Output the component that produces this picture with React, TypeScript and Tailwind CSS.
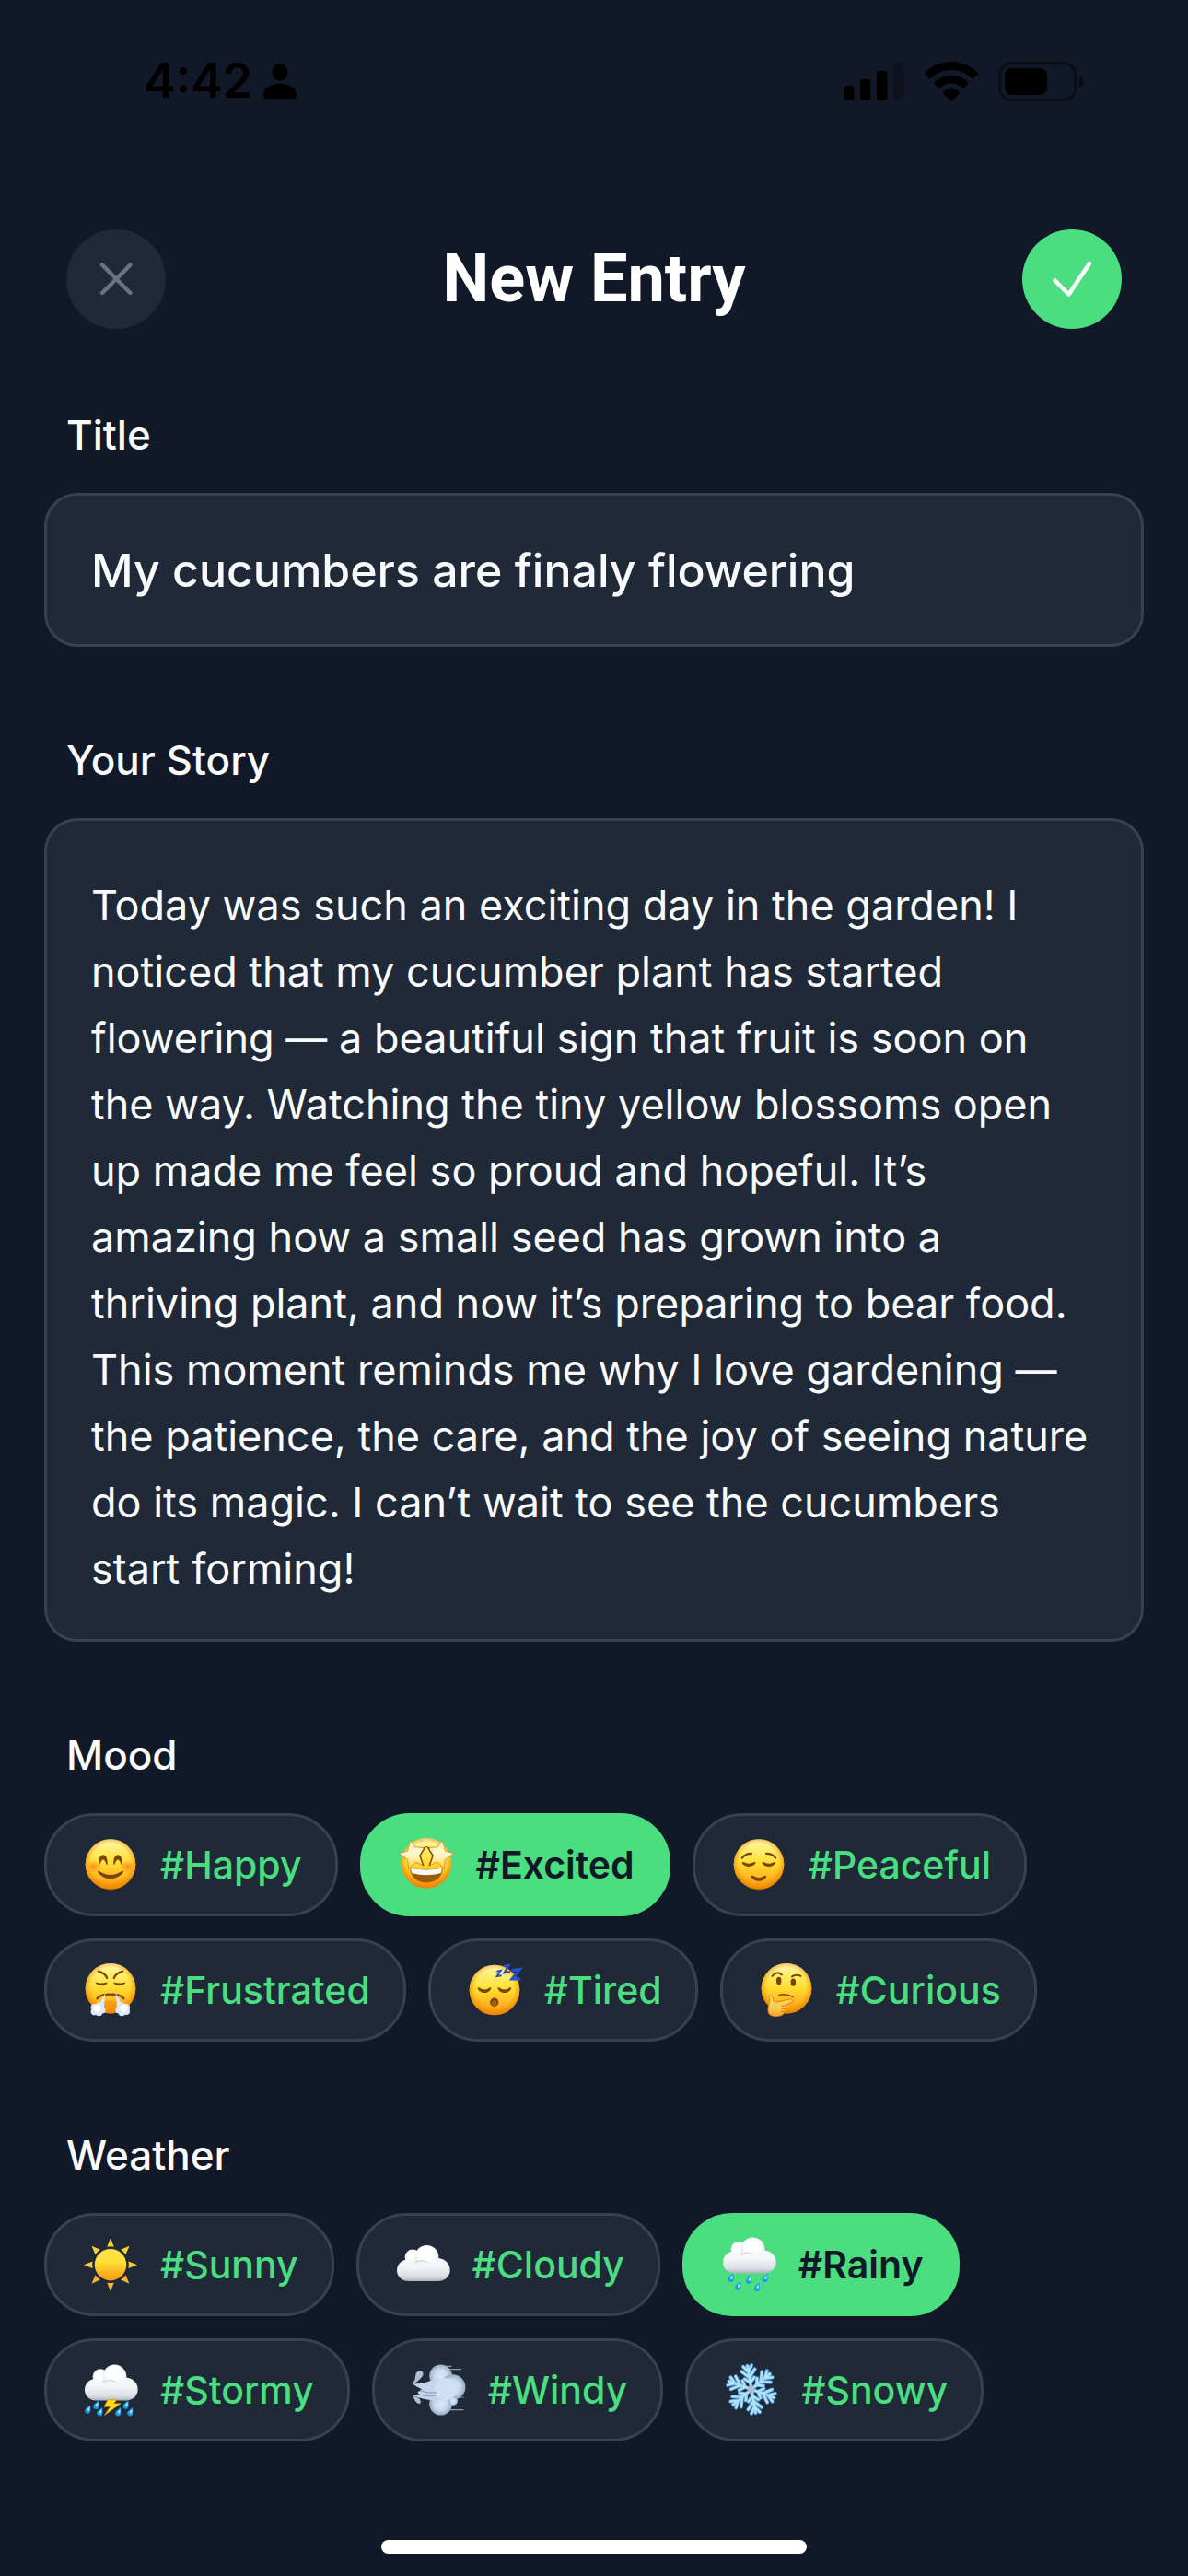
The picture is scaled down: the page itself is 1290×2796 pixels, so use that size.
import { useId, useState } from 'react'
import type { ReactNode } from 'react'

const INITIAL_TITLE = 'My cucumbers are finaly flowering'

const INITIAL_STORY =
  'Today was such an exciting day in the garden! I noticed that my cucumber plant has started flowering — a beautiful sign that fruit is soon on the way. Watching the tiny yellow blossoms open up made me feel so proud and hopeful. It’s amazing how a small seed has grown into a thriving plant, and now it’s preparing to bear food. This moment reminds me why I love gardening — the patience, the care, and the joy of seeing nature do its magic. I can’t wait to see the cucumbers start forming!'

const BROWN = '#7a4406'

function Emoji({ children }: { children: ReactNode }) {
  return (
    <span className="flex w-[66px] shrink-0 justify-center">
      <svg viewBox="0 0 60 60" className="h-[60px] w-[60px] overflow-visible" aria-hidden="true">
        {children}
      </svg>
    </span>
  )
}

function Face({ cy = 29.5, children }: { cy?: number; children: ReactNode }) {
  const id = useId()
  return (
    <Emoji>
      <defs>
        <linearGradient id={`${id}f`} x1="0" y1="0" x2="0" y2="1">
          <stop offset="0" stopColor="#fff7b8" />
          <stop offset="0.22" stopColor="#ffee6e" />
          <stop offset="0.5" stopColor="#ffdb2f" />
          <stop offset="0.78" stopColor="#ffb41f" />
          <stop offset="1" stopColor="#f78f0c" />
        </linearGradient>
        <radialGradient id={`${id}e`} cx="0.5" cy="0.47" r="0.53">
          <stop offset="0.72" stopColor="#f59300" stopOpacity="0" />
          <stop offset="1" stopColor="#e87c00" stopOpacity="0.8" />
        </radialGradient>
      </defs>
      <circle cx="30" cy={cy} r="27.3" fill={`url(#${id}f)`} />
      <circle cx="30" cy={cy} r="27.3" fill={`url(#${id}e)`} />
      {children}
    </Emoji>
  )
}

function HappyEmoji() {
  const id = useId()
  return (
    <Face>
      <defs>
        <radialGradient id={id}>
          <stop offset="0" stopColor="#ff7a1a" stopOpacity="0.8" />
          <stop offset="1" stopColor="#ff7a1a" stopOpacity="0" />
        </radialGradient>
      </defs>
      <ellipse cx="11.5" cy="32" rx="8.5" ry="7" fill={`url(#${id})`} />
      <ellipse cx="48.5" cy="32" rx="8.5" ry="7" fill={`url(#${id})`} />
      <g fill={BROWN}>
        <path d="M17.3 29.2C16.6 15.8 27.4 15.8 26.7 29.2C25 32 24.9 24.6 22 24.6S19 32 17.3 29.2Z" />
        <path d="M33.3 29.2C32.6 15.8 43.4 15.8 42.7 29.2C41 32 40.9 24.6 38 24.6S35 32 33.3 29.2Z" />
        <path d="M16.3 37C17.3 35.6 22 41 30 41S42.7 35.6 43.7 37C44.6 38.5 38.5 45.2 30 45.2S15.4 38.5 16.3 37Z" />
      </g>
    </Face>
  )
}

function ExcitedEmoji() {
  const id = useId()
  const star = 'M12.8 3.4L17.8 10.9L28.4 11.4L22.8 20.2L26.8 31L18.4 27L10.6 34.2L9.7 24.3L0 17.6L9.4 15.3Z'
  return (
    <Face cy={28.3}>
      <defs>
        <linearGradient id={id} x1="0" y1="0" x2="0" y2="1">
          <stop offset="0" stopColor="#fff9c8" />
          <stop offset="0.55" stopColor="#fff5c9" />
          <stop offset="1" stopColor="#ffd02a" />
        </linearGradient>
      </defs>
      <g fill={`url(#${id})`} stroke="#c98a1c" strokeWidth="0.8" strokeLinejoin="round">
        <path d={star} />
        <path d={star} transform="matrix(-1 0 0 1 60 0)" />
      </g>
      <path d="M26.5 12.2L28.4 11.4L23 20.2L26.8 31" fill="none" stroke="#8a5208" strokeWidth="1.6" />
      <path d="M33.5 12.2L31.6 11.4L37 20.2L33.2 31" fill="none" stroke="#8a5208" strokeWidth="1.6" />
      <path d="M12.4 33.2Q30 37 47.6 33.2C48 43 40 49.4 30 49.4S12 43 12.4 33.2Z" fill="#9a5c0c" />
      <path d="M13.3 33.8Q30 37.4 46.7 33.8C46.8 35.8 46.3 37.8 45.5 39.3Q30 43.4 14.5 39.3C13.7 37.8 13.2 35.8 13.3 33.8Z" fill="#f7f7f4" />
    </Face>
  )
}

function PeacefulEmoji() {
  return (
    <Face>
      <g fill="none" stroke={BROWN} strokeLinecap="round">
        <path d="M11.8 22.6Q15.5 17.7 22 17.8" strokeWidth="2.2" />
        <path d="M48.2 22.6Q44.5 17.7 38 17.8" strokeWidth="2.2" />
      </g>
      <g fill={BROWN}>
        <path d="M11.8 27.6C13 25.6 15.5 28.7 19.2 28.7S25.2 25.6 26.4 27.6C27 29.2 23.6 32 19.2 32S11.2 29.2 11.8 27.6Z" />
        <path d="M33.6 27.6C34.8 25.6 37.1 28.7 40.8 28.7S47 25.6 48.2 27.6C48.8 29.2 45.2 32 40.8 32S33 29.2 33.6 27.6Z" />
        <path d="M22 42.2C23 40.6 25.5 44 30 44S37 40.6 38 42.2C38.8 44 35 47.8 30 47.8S21.2 44 22 42.2Z" />
      </g>
    </Face>
  )
}

function FrustratedEmoji() {
  return (
    <Face cy={28.3}>
      <g fill="none" stroke={BROWN} strokeLinecap="round">
        <path d="M16.8 9.6Q24 11.2 26.2 17" strokeWidth="2.2" />
        <path d="M43.2 9.6Q36 11.2 33.8 17" strokeWidth="2.2" />
        <path d="M15.6 39.2Q18.5 34.6 30 34.6T44.4 39.2" strokeWidth="2.4" />
      </g>
      <g fill={BROWN}>
        <path d="M13.5 21.6Q20 23.6 26.5 21.6C26.5 26.4 14.5 26.6 13.5 21.6Z" />
        <path d="M33.5 21.6Q40 23.6 46.5 21.6C45.5 26.6 33.5 26.4 33.5 21.6Z" />
      </g>
      <path d="M23 43Q30 39 37 43V54Q30 56.5 23 54Z" fill="#f28a08" opacity="0.55" />
      <g fill="#dbe9fb">
        <path d="M24.6 32.4L16.8 47.6L22.8 48.6Z" />
        <path d="M35.4 32.4L43.2 47.6L37.2 48.6Z" />
        <circle cx="12.6" cy="49" r="4" />
        <circle cx="18.6" cy="47.8" r="4.6" />
        <circle cx="12.4" cy="53.6" r="3.8" />
        <circle cx="17.4" cy="54.4" r="3.8" />
        <circle cx="21" cy="51.8" r="3.6" />
        <circle cx="47" cy="49" r="4" />
        <circle cx="41.2" cy="47.8" r="4.6" />
        <circle cx="47.2" cy="53.2" r="3.8" />
        <circle cx="42.4" cy="54.4" r="3.8" />
        <circle cx="39" cy="51.8" r="3.6" />
      </g>
      <g fill="#fff">
        <circle cx="15.4" cy="49.6" r="4.2" />
        <circle cx="44.4" cy="49.6" r="4.2" />
      </g>
    </Face>
  )
}

function TiredEmoji() {
  return (
    <Face cy={30}>
      <g fill={BROWN}>
        <path d="M11.8 27.4C13 26.2 15.4 29.4 19.2 29.4S25 26.2 26.2 27.4C27 29 23.4 33 19.2 33S11 29 11.8 27.4Z" />
        <path d="M33.6 27.4C34.8 26.2 37.1 29.4 40.8 29.4S46.8 26.2 48 27.4C48.8 29 45.2 33 40.8 33S32.8 29 33.6 27.4Z" />
      </g>
      <ellipse cx="29.8" cy="43.2" rx="4.6" ry="4.7" fill={BROWN} />
      <ellipse cx="29.8" cy="44.2" rx="2.8" ry="2.8" fill="#a8640d" />
      <g fill="none" stroke="#2450c8" strokeLinejoin="miter">
        <polyline points="32.2,9.6 36.8,8.8 32.6,15 37.6,14.2" strokeWidth="1.9" />
        <polyline points="39.6,4 45.6,3 40.6,11.2 47,10.2" strokeWidth="2.3" />
        <polyline points="48.6,8.6 57.4,7.6 49,18 58.4,18" strokeWidth="3.2" />
      </g>
    </Face>
  )
}

function CuriousEmoji() {
  const id = useId()
  return (
    <Face cy={28.3}>
      <defs>
        <linearGradient id={id} x1="0" y1="0" x2="0" y2="1">
          <stop offset="0" stopColor="#ffd95a" />
          <stop offset="0.6" stopColor="#ffcb52" />
          <stop offset="1" stopColor="#f9a62e" />
        </linearGradient>
      </defs>
      <g fill="none" stroke={BROWN} strokeLinecap="round">
        <path d="M14.4 15Q19.2 8.6 25 13.4" strokeWidth="2" />
        <path d="M36 15.4Q40.4 12.6 45.6 14.8" strokeWidth="2" />
        <path d="M22 35.6Q29 33.4 36.8 37.4" strokeWidth="1.6" />
      </g>
      <ellipse cx="21.7" cy="20" rx="2.8" ry="4.2" fill={BROWN} />
      <ellipse cx="37.3" cy="21.6" rx="2.8" ry="4.2" fill={BROWN} />
      <path
        d="M11.6 35.6C13.6 34.6 15.2 37 15.6 40.2C16 42.6 17.6 43.4 20 43L34.4 39.8C37 39.4 37.8 42.2 35.4 43.4L28.6 46.6C30 48 29.2 49.6 28.4 50C29.2 51.6 28.4 53 27.4 53.4C27.8 56.6 24 58.4 18 58.4C12 58.4 9.6 55.8 10 50.6C10.3 45.6 12.4 43.6 11.6 40C11.2 38 10.6 36.2 11.6 35.6Z"
        fill={`url(#${id})`}
        stroke="#de8310"
        strokeWidth="1"
      />
      <path d="M28.6 46.6L24.4 47.6M28.4 50L24.6 50.6M27.4 53.4L24 53.6" stroke="#d57a0c" strokeWidth="1" fill="none" />
    </Face>
  )
}

function SunEmoji() {
  const id = useId()
  return (
    <Emoji>
      <defs>
        <linearGradient id={id} x1="0" y1="0" x2="0" y2="1">
          <stop offset="0" stopColor="#ffe04a" />
          <stop offset="0.4" stopColor="#ffdf35" />
          <stop offset="1" stopColor="#f39a12" />
        </linearGradient>
      </defs>
      {[0, 45, 90, 135, 180, 225, 270, 315].map((deg) => (
        <path
          key={deg}
          d="M30 1.2L33.8 10.8Q30 9.8 26.2 10.8Z"
          fill={deg > 90 && deg < 270 ? '#fbb03a' : '#fbcf38'}
          transform={`rotate(${deg} 30 30.2)`}
        />
      ))}
      <circle cx="30" cy="30.2" r="17.2" fill={`url(#${id})`} />
    </Emoji>
  )
}

function Cloud({ y }: { y: number }) {
  const id = useId()
  return (
    <g transform={`translate(0 ${y})`}>
      <defs>
        <linearGradient id={`${id}b`} x1="0" y1="9" x2="0" y2="48" gradientUnits="userSpaceOnUse">
          <stop offset="0" stopColor="#ffffff" />
          <stop offset="0.6" stopColor="#f4f5f7" />
          <stop offset="0.88" stopColor="#d9dce2" />
          <stop offset="1" stopColor="#aab4bf" />
        </linearGradient>
        <radialGradient id={`${id}l`} cx="0.5" cy="0.4" r="0.6">
          <stop offset="0.55" stopColor="#ffffff" />
          <stop offset="1" stopColor="#dfe1e6" />
        </radialGradient>
      </defs>
      <circle cx="19" cy="22" r="8.4" fill={`url(#${id}l)`} />
      <circle cx="34.4" cy="22" r="13" fill={`url(#${id}l)`} />
      <path
        d="M14.5 24.2C18 24.2 21 25.4 23.4 27.6C27 25.4 32 25.2 35.6 27.4C38.4 24.4 42.4 22.8 46.6 23C54.2 23.4 59.7 29 59.7 36C59.7 43 54 48 47 48H14.5C7.4 48 2 43 2 36.2C2 29.4 7.6 24.2 14.5 24.2Z"
        fill={`url(#${id}b)`}
      />
      <path d="M21 28.4Q28 23.4 35.4 27.6" fill="none" stroke="#d3d6dc" strokeWidth="1.2" />
    </g>
  )
}

function Drops({ at }: { at: [number, number][] }) {
  return (
    <>
      {at.map(([x, y]) => (
        <g key={`${x}-${y}`} transform={`translate(${x} ${y}) rotate(24)`}>
          <path d="M0 -5.2C1.4 -2 3 -0.4 3 1.8A3 3 0 0 1 -3 1.8C-3 -0.4 -1.4 -2 0 -5.2Z" fill="#1c9be8" />
          <path d="M0.2 -3.4C0.8 -1.6 1.6 -0.4 1.4 1A1.3 1.3 0 0 1 -1 0.8C-1 -0.6 -0.2 -1.6 0.2 -3.4Z" fill="#a9e8ff" />
        </g>
      ))}
    </>
  )
}

function CloudEmoji() {
  return (
    <Emoji>
      <Cloud y={0} />
    </Emoji>
  )
}

function RainEmoji() {
  return (
    <Emoji>
      <Cloud y={-8.6} />
      <Drops at={[[11.3, 44.3], [19, 53], [30.7, 46], [39.7, 54.3], [48.3, 44.3]]} />
    </Emoji>
  )
}

function StormEmoji() {
  return (
    <Emoji>
      <Cloud y={-6.4} />
      <Drops at={[[6, 51], [15, 46.3], [19, 53.7], [39, 53.7], [47.3, 46], [52, 53.7]]} />
      <path
        d="M27.3 40.6L23 48.3L30 48L23.7 57.3L41 44.7L33.6 45L36.6 40.6Z"
        fill="#ffd91a"
        stroke="#e39b0a"
        strokeWidth="0.8"
        strokeLinejoin="round"
      />
    </Emoji>
  )
}

function WindEmoji() {
  const id = useId()
  return (
    <Emoji>
      <defs>
        <radialGradient id={id}>
          <stop offset="0" stopColor="#dcebfb" />
          <stop offset="0.6" stopColor="#c6d8ee" />
          <stop offset="1" stopColor="#97a9c3" />
        </radialGradient>
      </defs>
      <g stroke="#8d9db6" strokeLinecap="round" strokeWidth="1.2">
        <path d="M36 4.4H44M40 7.6H54.6M50 38H57M40 51.6H57" />
      </g>
      <circle cx="32.6" cy="14.8" r="12.4" fill={`url(#${id})`} />
      <circle cx="32.6" cy="45.2" r="12.4" fill={`url(#${id})`} />
      <circle cx="45.6" cy="27" r="13.8" fill={`url(#${id})`} />
      <circle cx="46" cy="42" r="5" fill={`url(#${id})`} />
      <path
        d="M1 22.4C7 24.4 14 22.6 20.4 20.6C30 15 44 20 46 30C44 38 34 43 25 41.6C17 40.6 9 39 1 35.8C5 36.2 8 36 10.4 35.2C8 33.8 6.6 32.6 8.4 31.4C11 31.4 12 30.4 11.6 29C9.4 27.6 5 26 1 22.4Z"
        fill="#c3d5ea"
      />
      <circle cx="38" cy="29" r="12" fill="#cfe0f3" />
      <path d="M10 30.4C16 33 22 33.6 28 32.6M12 35.4C18 37 23 37 27 36" fill="none" stroke="#93a5bf" strokeWidth="1.2" />
      <path d="M1.4 22C5.8 20 4.4 16.6 5.6 12.8C6.6 8.6 12.2 7.8 13.4 11.6C14.2 15.8 9.6 18.4 7.6 20.6C5.6 22.4 3 22.8 1.4 22Z" fill="#adbfd8" />
      <path d="M1.6 36.4C4 39 5.2 44.6 9.6 45.2C12 43.4 10.6 39.4 7.6 38.2C5.4 37.2 3.4 37 1.6 36.4Z" fill="#adbfd8" />
    </Emoji>
  )
}

function SnowEmoji() {
  const arm = 'M30 29.4V3.4M30 16.4L22.6 8.4M30 16.4L37.4 8.4M30 10.4L25.4 3.6M30 10.4L34.6 3.6M30 22L24.6 17M30 22L35.4 17'
  const angles = [-10, 50, 110, 170, 230, 290]
  return (
    <Emoji>
      <g fill="none" strokeLinecap="round" strokeLinejoin="round">
        {angles.map((deg) => (
          <path key={deg} d={arm} stroke="#5fb0e8" strokeWidth="4" transform={`rotate(${deg} 30 29.4)`} />
        ))}
        {angles.map((deg) => (
          <path key={deg} d={arm} stroke="#b5e2f8" strokeWidth="2.2" transform={`rotate(${deg} 30 29.4)`} />
        ))}
      </g>
      <circle cx="30" cy="29.4" r="4" fill="#a9bfd0" />
    </Emoji>
  )
}

interface Tag {
  name: string
  icon: ReactNode
}

const MOODS: Tag[] = [
  { name: 'Happy', icon: <HappyEmoji /> },
  { name: 'Excited', icon: <ExcitedEmoji /> },
  { name: 'Peaceful', icon: <PeacefulEmoji /> },
  { name: 'Frustrated', icon: <FrustratedEmoji /> },
  { name: 'Tired', icon: <TiredEmoji /> },
  { name: 'Curious', icon: <CuriousEmoji /> },
]

const WEATHER: Tag[] = [
  { name: 'Sunny', icon: <SunEmoji /> },
  { name: 'Cloudy', icon: <CloudEmoji /> },
  { name: 'Rainy', icon: <RainEmoji /> },
  { name: 'Stormy', icon: <StormEmoji /> },
  { name: 'Windy', icon: <WindEmoji /> },
  { name: 'Snowy', icon: <SnowEmoji /> },
]

const labelStyle = 'block px-6 text-[44px] leading-[54px] font-medium text-gray-50'
const fieldStyle =
  'block w-full rounded-[36px] border-[3px] border-[#374151] bg-[#1f2937] px-12 text-gray-50 outline-none'

function TagPicker({
  label,
  tags,
  value,
  onChange,
}: {
  label: string
  tags: Tag[]
  value: string
  onChange: (name: string) => void
}) {
  const id = useId()
  return (
    <section aria-labelledby={id}>
      <h2 id={id} className={labelStyle}>
        {label}
      </h2>
      <div className="mt-9 flex flex-wrap gap-6">
        {tags.map(({ name, icon }) => {
          const active = name === value
          const style = active
            ? 'border-[#4ade80] bg-[#4ade80] font-semibold text-[#111827]'
            : 'border-[#374151] bg-[#1f2937] font-medium text-[#4ade80]'
          return (
            <button
              key={name}
              type="button"
              aria-pressed={active}
              onClick={() => onChange(name)}
              className={`flex h-28 cursor-pointer items-center gap-[21px] rounded-[54px] border-[3px] px-9 text-[41px] leading-[54px] ${style}`}
            >
              {icon}
              <span>#{name}</span>
            </button>
          )
        })}
      </div>
    </section>
  )
}

function StatusBar() {
  return (
    <div className="flex h-[60px] items-center justify-between pr-[112px] pl-[156px] text-black">
      <div className="flex items-center gap-3">
        <span className="text-[52px] leading-[60px] font-semibold">4:42</span>
        <svg viewBox="0 0 36 38" className="h-[38px] w-9" aria-hidden="true">
          <ellipse cx="18" cy="9.4" rx="8.6" ry="9.4" />
          <path d="M0 34.4C0 27 8 21.8 18 21.8S36 27 36 34.4C36 37 34.6 38 32.4 38H3.6C1.4 38 0 37 0 34.4Z" />
        </svg>
      </div>
      <div className="flex items-center">
        <svg viewBox="0 0 66 43" className="h-[43px] w-[66px]" aria-hidden="true">
          <rect x="0" y="26" width="11.4" height="16" rx="3.4" />
          <rect x="18" y="19" width="11.4" height="23" rx="3.4" />
          <rect x="36" y="10" width="11.4" height="32" rx="3.4" />
          <rect x="54" y="1" width="11.4" height="41" rx="3.4" opacity="0.22" />
        </svg>
        <svg viewBox="0 0 58 43" className="ml-[22px] h-[43px] w-[58px]" aria-hidden="true">
          <path d="M29 0C18.400 0 8.600 4 1.200 11C0.200 12 0.200 13.200 1 14L4.600 17.600C5.400 18.400 6.400 18.400 7.200 17.600C13 12.200 20.600 9 29 9S45 12.200 50.800 17.600C51.600 18.400 52.600 18.400 53.400 17.600L57 14C57.800 13.200 57.800 12 56.800 11C49.400 4 39.600 0 29 0Z" />
          <path d="M29 15C22.400 15 16.200 17.400 11.400 21.600C10.400 22.400 10.400 23.600 11.200 24.400L14.800 28C15.600 28.800 16.600 28.800 17.400 28C20.600 25.400 24.600 23.400 29 23.400S37.400 25.400 40.600 28C41.400 28.800 42.400 28.800 43.200 28L46.800 24.400C47.600 23.600 47.600 22.400 46.600 21.600C41.800 17.400 35.600 15 29 15Z" />
          <path d="M29 29.400C26 29.400 23.200 30.400 21 32.200C20 33 20 34.200 20.800 35L27.800 42C28.600 42.800 29.400 42.800 30.200 42L37.200 35C38 34.200 38 33 37 32.200C34.800 30.400 32 29.400 29 29.400Z" />
        </svg>
        <svg viewBox="0 0 94 43" className="ml-[22px] h-[43px] w-[94px]" aria-hidden="true">
          <rect x="1.600" y="1.600" width="82" height="39.800" rx="12" fill="none" stroke="#000" strokeWidth="3.200" opacity="0.4" />
          <rect x="7" y="7" width="46" height="29" rx="7.600" />
          <path d="M88 14.500C91 15.600 93 18.400 93 21.500S91 27.400 88 28.500Z" opacity="0.45" />
        </svg>
      </div>
    </div>
  )
}

export default function App() {
  const [title, setTitle] = useState(INITIAL_TITLE)
  const [story, setStory] = useState(INITIAL_STORY)
  const [mood, setMood] = useState('Excited')
  const [weather, setWeather] = useState('Rainy')

  return (
    <div className="flex min-h-screen flex-col bg-[#111827] pt-[58px] font-['Inter',sans-serif]">
      <StatusBar />

      <header className="mt-[131px] flex items-center justify-between px-[72px]">
        <button
          type="button"
          aria-label="Close"
          className="h-[108px] w-[108px] cursor-pointer rounded-full bg-[#1f2937] text-[#6b7280]"
        >
          <svg viewBox="0 0 108 108" fill="none" stroke="currentColor" strokeWidth="4.5" strokeLinecap="round">
            <path d="M39 38.500L69.500 69M69.500 38.500L39 69" />
          </svg>
        </button>
        <h1 className="font-['Roboto',sans-serif] text-[72px] leading-[84px] font-bold text-white">New Entry</h1>
        <button
          type="button"
          aria-label="Save entry"
          className="h-[108px] w-[108px] cursor-pointer rounded-full bg-[#4ade80] text-white"
        >
          <svg
            viewBox="0 0 108 108"
            fill="none"
            stroke="currentColor"
            strokeWidth="4.5"
            strokeLinecap="round"
            strokeLinejoin="round"
          >
            <path d="M35.500 55.500L50.500 70.500L73 37" />
          </svg>
        </button>
      </header>

      <main className="mt-[88px] flex flex-col gap-24 px-12">
        <div>
          <label htmlFor="entry-title" className={labelStyle}>
            Title
          </label>
          <input
            id="entry-title"
            type="text"
            value={title}
            onChange={(e) => setTitle(e.target.value)}
            spellCheck={false}
            className={`${fieldStyle} mt-9 h-[167px] text-[50px] font-medium`}
          />
        </div>
        <div>
          <label htmlFor="entry-story" className={labelStyle}>
            Your Story
          </label>
          <textarea
            id="entry-story"
            rows={11}
            value={story}
            onChange={(e) => setStory(e.target.value)}
            spellCheck={false}
            className={`${fieldStyle} mt-9 resize-none overflow-hidden pt-14 pb-10 text-[45px] leading-[72px]`}
          />
        </div>
        <TagPicker label="Mood" tags={MOODS} value={mood} onChange={setMood} />
        <TagPicker label="Weather" tags={WEATHER} value={weather} onChange={setWeather} />
      </main>

      <div className="mt-auto flex justify-center pt-12 pb-6">
        <div className="h-[15px] w-[462px] rounded-full bg-white" />
      </div>
    </div>
  )
}
